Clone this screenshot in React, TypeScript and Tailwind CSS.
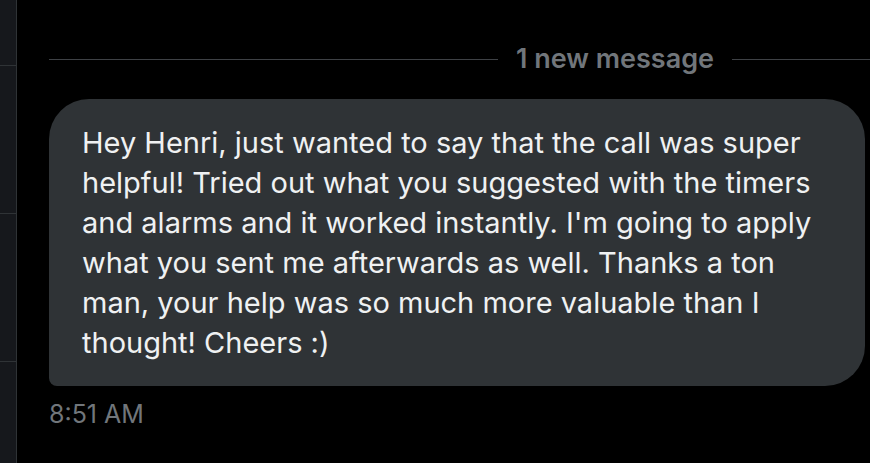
export default function App() {
  const lines = [
    'Hey Henri, just wanted to say that the call was super',
    'helpful! Tried out what you suggested with the timers',
    "and alarms and it worked instantly. I'm going to apply",
    'what you sent me afterwards as well. Thanks a ton',
    'man, your help was so much more valuable than I',
    'thought! Cheers :)',
  ]

  return (
    <div
      className="flex h-[463px] w-[870px] overflow-hidden bg-black"
      style={{ fontFamily: 'Inter, "Noto Sans", sans-serif' }}
    >
      {/* sidebar strip */}
      <div className="flex w-[17px] shrink-0 flex-col border-r border-[#2f3336] bg-[#16181c]">
        <div className="h-[66px] border-b border-[#2f3336]" />
        <div className="h-[148px] border-b border-[#2f3336]" />
        <div className="h-[148px] border-b border-[#2f3336]" />
      </div>

      <div className="flex flex-1 flex-col pl-[32px] pr-[5px]">
        {/* divider */}
        <div className="mt-[42px] flex items-center -mr-[5px]">
          <div className="h-px flex-1 bg-[#3e4145]" />
          <span className="px-[18px] text-[27px] font-semibold leading-[34px] text-[#71767b]">
            1 new message
          </span>
          <div className="h-px w-[138px] bg-[#3e4145]" />
        </div>

        {/* bubble */}
        <div className="mt-[23px] rounded-[40px] rounded-bl-[8px] bg-[#2f3336] pl-[33px] pr-6 pb-[23px] pt-[24px]">
          {lines.map((l) => (
            <p key={l} className="whitespace-nowrap text-[29px] leading-[40px] text-[#eff1f2]">
              {l}
            </p>
          ))}
        </div>

        <p className="mt-[12px] text-[25px] leading-[32px] text-[#71767b]">8:51 AM</p>
      </div>
    </div>
  )
}
